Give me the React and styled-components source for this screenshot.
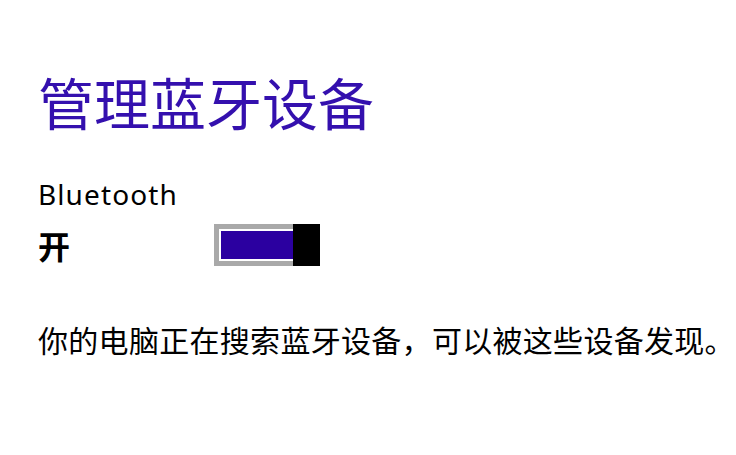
import React from 'react'
import styled, { createGlobalStyle } from 'styled-components'

const GlobalStyle = createGlobalStyle`
  html, body {
    margin: 0;
    padding: 0;
    background: #ffffff;
    overflow: hidden;
  }
`;

const Page = styled.div`
  display: flex;
  flex-direction: column;
  padding: 69px 0 0 38px;
  width: 736px;
  height: 455px;
  box-sizing: border-box;
  font-family: "Noto Sans", "Noto Sans CJK SC", sans-serif;
  color: #000;
`;

const Title = styled.h1`
  margin: 0;
  font-family: "Noto Sans CJK SC", sans-serif;
  font-weight: 400;
  font-size: 56px;
  line-height: 64px;
  color: #3410ae;
`;

const Label = styled.div`
  margin-top: 44px;
  font-size: 28px;
  line-height: 34px;
  letter-spacing: 1.1px;
`;

const SwitchRow = styled.div`
  display: flex;
  align-items: center;
  margin-top: 13px;
`;

const State = styled.span`
  width: 176px;
  font-family: "Noto Sans CJK SC", sans-serif;
  font-weight: 700;
  font-size: 32px;
  line-height: 42px;
`;

const Toggle = styled.div`
  position: relative;
  display: flex;
  width: 106px;
  height: 42px;
  box-sizing: border-box;
  border: 5px solid #a9a9a9;
  padding: 2px;
  background: #fff;
`;

const Fill = styled.div`
  flex: 1;
  background: ${p => (p.$on ? '#2b00a0' : '#fff')};
`;

const Thumb = styled.div`
  position: absolute;
  top: -5px;
  ${p => (p.$on ? 'right: -5px;' : 'left: -5px;')}
  width: 27px;
  height: 42px;
  background: #000;
`;

const Description = styled.p`
  margin: 53px 0 0;
  font-family: "Noto Sans CJK SC", sans-serif;
  font-size: 30px;
  line-height: 40px;
  letter-spacing: 0.3px;
  white-space: nowrap;
`;

export default function App() {
  const on = true;
  return (
    <>
      <GlobalStyle />
      <Page>
        <Title>管理蓝牙设备</Title>
        <Label>Bluetooth</Label>
        <SwitchRow>
          <State>{on ? '开' : '关'}</State>
          <Toggle>
            <Fill $on={on} />
            <Thumb $on={on} />
          </Toggle>
        </SwitchRow>
        <Description>你的电脑正在搜索蓝牙设备，可以被这些设备发现。</Description>
      </Page>
    </>
  );
}
